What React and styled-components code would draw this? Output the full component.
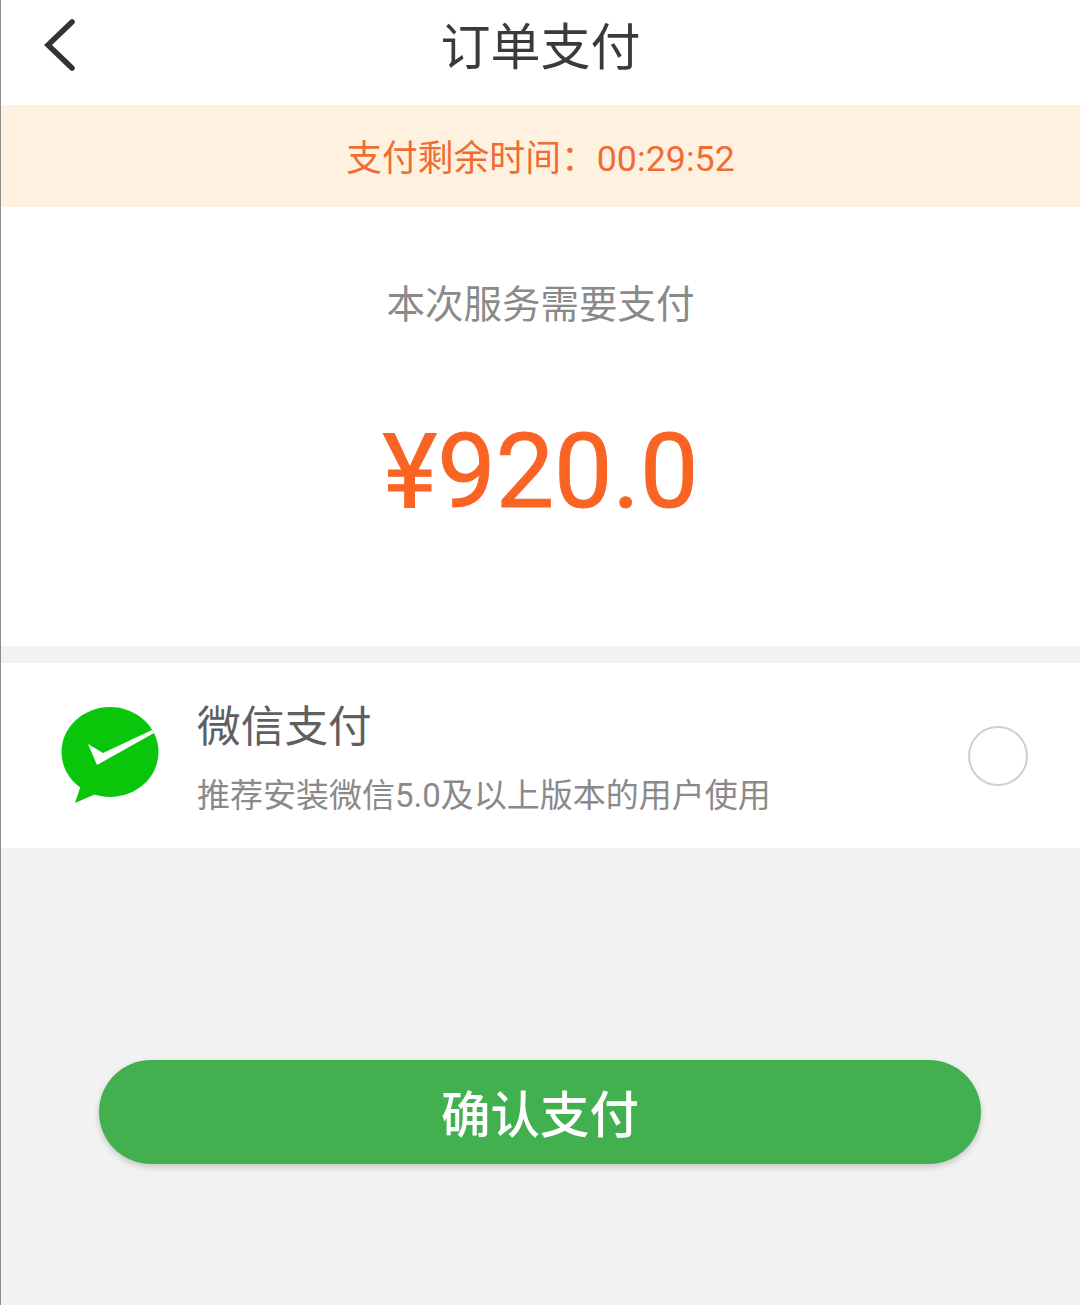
import React from 'react'
import styled, { createGlobalStyle } from 'styled-components';

const GlobalStyle = createGlobalStyle`
  html, body {
    margin: 0;
    padding: 0;
    background: #f2f2f2;
  }
  * {
    box-sizing: border-box;
  }
`;

const Page = styled.div`
  width: 1080px;
  height: 1305px;
  overflow: hidden;
  display: flex;
  flex-direction: column;
  background: #f2f2f2;
  border-left: 1px solid #8c8c8c;
  font-family: Roboto, "Noto Sans CJK SC", sans-serif;
`;

const Header = styled.header`
  height: 105px;
  flex: none;
  display: flex;
  align-items: center;
  justify-content: center;
  position: relative;
  background: #fff;
  padding-bottom: 9px;
`;

const BackIcon = styled.svg`
  position: absolute;
  left: 40px;
  top: 16px;
  width: 36px;
  height: 58px;
`;

const Title = styled.h1`
  margin: 0;
  font-size: 50px;
  line-height: 60px;
  font-weight: 400;
  color: #3a3a3a;
`;

const Countdown = styled.div`
  height: 102px;
  flex: none;
  display: flex;
  align-items: center;
  justify-content: center;
  background: #fff1df;
  color: #ef6d33;
  font-size: 35.8px;
  padding-bottom: 2px;
`;

const Amount = styled.section`
  height: 439px;
  flex: none;
  display: flex;
  flex-direction: column;
  align-items: center;
  background: #fff;
  padding-top: 71px;
`;

const AmountLabel = styled.div`
  font-size: 38.5px;
  line-height: 54px;
  color: #8a8a8a;
`;

const AmountValue = styled.div`
  margin-top: 82px;
  font-size: 104px;
  line-height: 116px;
  font-weight: 400;
  -webkit-text-stroke: 1px #f96424;
  color: #f96424;
`;

const PayRow = styled.section`
  height: 185px;
  flex: none;
  margin-top: 17px;
  display: flex;
  align-items: center;
  background: #fff;
  padding: 0 52px 0 59px;
`;

const WechatIcon = styled.svg`
  width: 102px;
  height: 100px;
  flex: none;
  margin-top: -4px;
`;

const PayText = styled.div`
  flex: 1;
  display: flex;
  flex-direction: column;
  margin-left: 35px;
  margin-top: 5px;
`;

const PayName = styled.div`
  font-size: 43.7px;
  line-height: 56px;
  color: #5f5f5f;
`;

const PayNote = styled.div`
  margin-top: 19px;
  font-size: 33px;
  line-height: 44px;
  color: #8a8a8a;
`;

const Radio = styled.span`
  width: 60px;
  height: 60px;
  flex: none;
  border: 2px solid #cfcfcf;
  border-radius: 50%;
`;

const ConfirmButton = styled.button`
  width: 882px;
  height: 104px;
  flex: none;
  margin: 212px 0 0 98px;
  padding: 0 0 2px;
  border: none;
  border-radius: 52px;
  background: #43b04f;
  color: #fff;
  font-family: inherit;
  font-size: 49.5px;
  font-weight: 500;
  box-shadow: 0 3px 6px rgba(0, 0, 0, 0.18);
`;

function App() {
    return (
        <>
            <GlobalStyle />
            <Page>
                <Header>
                    <BackIcon viewBox="0 0 36 58">
                        <path d="M31 6 L7 29 L31 52" fill="none" stroke="#333" strokeWidth="5.5" strokeLinecap="round" strokeLinejoin="miter" />
                    </BackIcon>
                    <Title>订单支付</Title>
                </Header>
                <Countdown>支付剩余时间：00:29:52</Countdown>
                <Amount>
                    <AmountLabel>本次服务需要支付</AmountLabel>
                    <AmountValue>¥920.0</AmountValue>
                </Amount>
                <PayRow>
                    <WechatIcon viewBox="0 0 102 100">
                        <ellipse cx="50" cy="48" rx="48.5" ry="45" fill="#0ac60a" />
                        <path d="M22 78 L15 99 L38 89 Z" fill="#0ac60a" />
                        <path d="M28 40 L43 49 L92 26 L94 29 L37 61 Z" fill="#fff" />
                    </WechatIcon>
                    <PayText>
                        <PayName>微信支付</PayName>
                        <PayNote>推荐安装微信5.0及以上版本的用户使用</PayNote>
                    </PayText>
                    <Radio />
                </PayRow>
                <ConfirmButton>确认支付</ConfirmButton>
            </Page>
        </>
    )
}

export default App
